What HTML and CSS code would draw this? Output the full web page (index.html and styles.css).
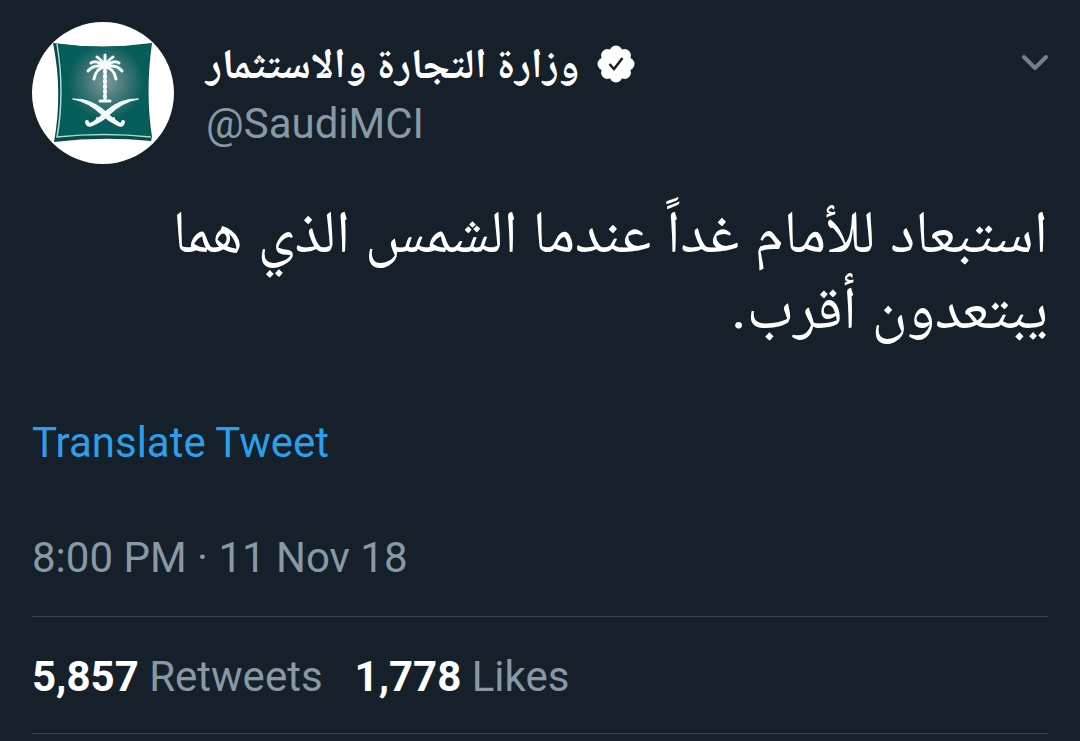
FILE: index.html
```html
<!DOCTYPE html>
<html lang="en">

<head>
    <meta charset="UTF-8">
    <meta name="viewport" content="width=device-width, initial-scale=1.0">
    <title>Tweet</title>
    <link rel="stylesheet" href="styles.css">
</head>

<body>
    <article class="tweet">
        <header class="tweet-header">
            <a href="#" class="avatar" aria-label="Profile">
                <svg viewBox="0 0 142 142" aria-hidden="true">
                    <defs>
                        <radialGradient id="flagGlow" cx="74" cy="60" r="38" gradientUnits="userSpaceOnUse">
                            <stop offset="0" stop-color="#7d9a9a" />
                            <stop offset="0.5" stop-color="#44797a" />
                            <stop offset="1" stop-color="#065e5b" />
                        </radialGradient>
                    </defs>
                    <circle cx="71" cy="71" r="71" fill="#fff" />
                    <!-- Flag -->
                    <path d="M21 21Q70 28 120 21Q113 70 120 115L119 119Q70 114 22 120Q31 70 21 21Z" fill="#0c4a48" />
                    <path d="M27 22Q72 28 119 22Q112 70 119 114Q70 109 26 115Q34 70 27 22Z" fill="url(#flagGlow)" />
                    <path d="M25 22Q33 70 25 115Q72 110 119 115" fill="none" stroke="#a5e0d4" stroke-width="1.5" />
                    <!-- Palm -->
                    <g fill="none" stroke="#f4fbfa" stroke-linecap="round">
                        <path d="M73 45V78" stroke-width="3" />
                        <path d="M73 48V78" stroke-width="4" stroke-dasharray="3 2" stroke-linecap="butt" />
                        <path d="M68 79H78" stroke-width="3" />
                        <path d="M73 45V33M73 45Q70 38 65 35M73 45Q76 38 81 35M73 45Q64 37 59 41M73 45Q82 37 87 41M73 45Q62 42 56 49M73 45Q84 42 90 49M73 45Q64 46 62 57M73 45Q82 46 84 57" stroke-width="3" />
                    </g>
                    <!-- Swords -->
                    <g fill="#f4fbfa" stroke="#f4fbfa" stroke-width="1" stroke-linecap="round">
                        <path d="M41 77Q58 76 73 89Q80 96 86 100L83 102Q76 99 70 93Q57 80 41 77Z" />
                        <path d="M106 77Q89 76 74 89Q67 96 61 100L64 102Q71 99 77 93Q90 80 106 77Z" />
                        <path d="M82 99Q90 106 91 100M65 99Q56 106 55 100" fill="none" stroke-width="4" />
                        <path d="M65 96L68 99M82 96L79 99" fill="none" stroke-width="2" />
                    </g>
                </svg>
            </a>
            <div class="author">
                <a href="#" class="author-name">
                    <span lang="ar" dir="rtl">وزارة التجارة والاستثمار</span>
                    <svg class="verified" viewBox="0 0 38 38" role="img" aria-label="Verified">
                        <g fill="#fff">
                            <circle cx="19" cy="19" r="14" />
                            <circle cx="19" cy="7" r="6.500" />
                            <circle cx="27.500" cy="10.500" r="6.500" />
                            <circle cx="31" cy="19" r="6.500" />
                            <circle cx="27.500" cy="27.500" r="6.500" />
                            <circle cx="19" cy="31" r="6.500" />
                            <circle cx="10.500" cy="27.500" r="6.500" />
                            <circle cx="7" cy="19" r="6.500" />
                            <circle cx="10.500" cy="10.500" r="6.500" />
                        </g>
                        <path d="M12.500 19L17 24L25.500 13" fill="none" stroke="#16202a" stroke-width="2.500" />
                    </svg>
                </a>
                <a href="#" class="author-handle">@SaudiMCI</a>
            </div>
            <button type="button" class="menu-button" aria-label="More options">
                <svg viewBox="0 0 26 18" aria-hidden="true">
                    <path d="M2 3L13 14L24 3" fill="none" stroke="#71808e" stroke-width="4" stroke-linecap="round" stroke-linejoin="round" />
                </svg>
            </button>
        </header>

        <p class="tweet-text" lang="ar" dir="rtl">استبعاد للأمام غداً عندما الشمس الذي هما يبتعدون أقرب.</p>

        <a href="#" class="translate">Translate Tweet</a>

        <time class="tweet-time" datetime="2018-11-11T20:00">8:00 PM · 11 Nov 18</time>

        <div class="tweet-stats">
            <a href="#"><strong>5,857</strong> Retweets</a>
            <a href="#"><strong>1,778</strong> Likes</a>
        </div>
    </article>
</body>

</html>
```
FILE: styles.css
```css
/* Basic Reset */
* {
    margin: 0;
    padding: 0;
    box-sizing: border-box;
}

body {
    font-family: Roboto, "Noto Naskh Arabic", "DejaVu Sans", sans-serif;
    font-size: 42px;
    line-height: 50px;
    background-color: #16202a;
    color: #8899a6;
}

a {
    color: inherit;
    text-decoration: none;
}

.tweet {
    display: flex;
    flex-direction: column;
    padding: 22px 32px 0;
}

/* Header */
.tweet-header {
    display: flex;
    align-items: flex-start;
    gap: 32px;
}

.avatar svg {
    display: block;
    width: 142px;
    height: 142px;
}

.author {
    display: flex;
    flex: 1;
    flex-direction: column;
    align-items: flex-start;
    gap: 10px;
    padding-top: 17px;
}

.author-name {
    display: flex;
    align-items: center;
    gap: 18px;
    font-weight: bold;
    color: #fff;
}

.verified {
    width: 38px;
    height: 38px;
}

.menu-button {
    padding-top: 32px;
    background: none;
    border: none;
    cursor: pointer;
}

.menu-button svg {
    display: block;
    width: 26px;
    height: 18px;
}

/* Tweet body */
.tweet-text {
    margin-top: 30px;
    font-size: 60px;
    line-height: 76px;
    color: #fff;
}

.translate {
    align-self: flex-start;
    margin-top: 72px;
    color: #2b9fec;
}

.tweet-time {
    margin-top: 65px;
}

/* Retweets and likes */
.tweet-stats {
    display: flex;
    gap: 32px;
    margin-top: 33px;
    padding: 35px 0 31px;
    border-top: 1px solid #38444d;
    border-bottom: 1px solid #38444d;
}

.tweet-stats strong {
    color: #fff;
}
```
